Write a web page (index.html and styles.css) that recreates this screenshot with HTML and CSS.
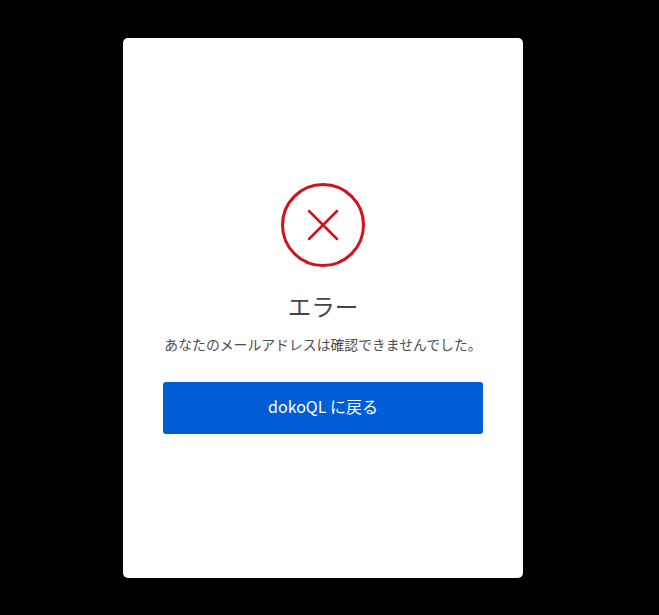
FILE: index.html
```html
<!DOCTYPE html>
<html lang="ja">
<head>
    <meta charset="UTF-8">
    <meta name="viewport" content="width=device-width, initial-scale=1.0">
    <title>エラー</title>
    <link rel="stylesheet" href="styles.css">
</head>
<body>
    <div class="card">
        <svg class="error-icon" width="84" height="84" viewBox="0 0 84 84" fill="none" stroke="#d0121b">
            <circle cx="42" cy="42" r="40.5" stroke-width="3"/>
            <path d="M28 28 L56 56 M56 28 L28 56" stroke-width="2.5" stroke-linecap="round"/>
        </svg>
        <h1>エラー</h1>
        <p>あなたのメールアドレスは確認できませんでした。</p>
        <a class="back-btn" href="#">dokoQL に戻る</a>
    </div>
</body>
</html>
```

FILE: styles.css
```css
html, body {
    height: 100%;
}

body {
    margin: 0;
    background: #000;
    font-family: "Noto Sans CJK JP", "Liberation Sans", sans-serif;
    color: #42454c;
    overflow: hidden;
}

.card {
    box-sizing: border-box;
    width: 400px;
    height: 540px;
    margin: 38px auto 0 123px;
    padding-top: 145px;
    background: #fff;
    border-radius: 5px;
    display: flex;
    flex-direction: column;
    align-items: center;
}

.error-icon {
    display: block;
}

h1 {
    margin: 21px 0 0;
    font-size: 23.5px;
    line-height: 36px;
    font-weight: 400;
}

p {
    margin: 10px 0 0;
    font-size: 13.85px;
    line-height: 20px;
    font-weight: 400;
    color: #4a4d55;
}

.back-btn {
    display: block;
    width: 320px;
    height: 52px;
    margin-top: 28px;
    background: #005dd6;
    border-radius: 3px;
    color: #fff;
    font-size: 16px;
    font-weight: 400;
    line-height: 48px;
    text-align: center;
    text-decoration: none;
}
```
